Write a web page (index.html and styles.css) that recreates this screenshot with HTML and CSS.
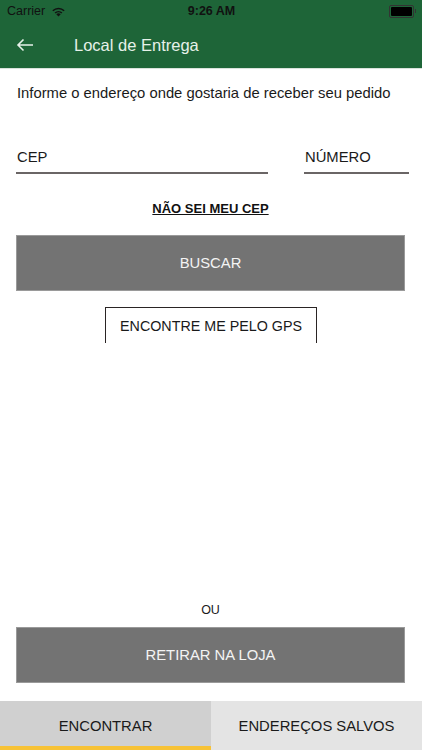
FILE: index.html
```html
<!DOCTYPE html>
<html lang="pt-BR">
<head>
    <meta charset="UTF-8">
    <meta name="viewport" content="width=device-width, initial-scale=1.0">
    <title>Local de Entrega</title>
    <link rel="stylesheet" href="styles.css">
</head>
<body>
    <div class="topbar">
        <div class="status">
            <div class="status-left">
                <span>Carrier</span>
                <svg class="wifi" width="15" height="11" viewBox="0 0 15 11">
                    <path d="M7.5 10.5 L5.3 8.2 A3.2 3.2 0 0 1 9.7 8.2 Z" fill="#111"/>
                    <path d="M3.6 6.5 A5.6 5.6 0 0 1 11.4 6.5 L10.3 7.6 A4.1 4.1 0 0 0 4.7 7.6 Z" fill="#111"/>
                    <path d="M1.3 4.2 A8.9 8.9 0 0 1 13.7 4.2 L12.6 5.3 A7.4 7.4 0 0 0 2.4 5.3 Z" fill="#111"/>
                </svg>
            </div>
            <div class="status-time">9:26 AM</div>
            <div class="status-right">
                <div class="battery"><div class="battery-fill"></div></div>
                <div class="battery-tip"></div>
            </div>
        </div>
        <div class="navbar">
            <svg class="back" width="18" height="14" viewBox="0 0 18 14">
                <path d="M17 7 H2 M7.5 1.5 L2 7 L7.5 12.5" stroke="#e6f1e9" stroke-width="1.6" fill="none"/>
            </svg>
            <span class="title">Local de Entrega</span>
        </div>
    </div>

    <main class="content">
        <p class="intro">Informe o endereço onde gostaria de receber seu pedido</p>

        <div class="fields">
            <div class="field field-cep">CEP</div>
            <div class="field field-num">NÚMERO</div>
        </div>

        <a class="link" href="#">NÃO SEI MEU CEP</a>

        <button class="btn">BUSCAR</button>

        <div class="gps-wrap">
            <button class="btn-outline">ENCONTRE ME PELO GPS</button>
        </div>

        <div class="spacer"></div>

        <p class="or">OU</p>
        <button class="btn">RETIRAR NA LOJA</button>
    </main>

    <nav class="tabs">
        <div class="tab active">ENCONTRAR</div>
        <div class="tab">ENDEREÇOS SALVOS</div>
    </nav>
</body>
</html>
```

FILE: styles.css
```css
html, body {
    height: 100%;
}

body {
    margin: 0;
    font-family: "Liberation Sans", Arial, sans-serif;
    color: #222;
    background: #fff;
    display: flex;
    flex-direction: column;
}

.topbar {
    background-color: #1e6538;
    height: 68px;
    border-bottom: 1px solid #d9e2dc;
}

.status {
    height: 22px;
    display: flex;
    align-items: center;
    justify-content: space-between;
    padding: 0 6px 0 7px;
    font-size: 12.5px;
    color: #111;
}

.status-left {
    display: flex;
    align-items: center;
    gap: 6px;
    width: 120px;
}

.status-time {
    font-weight: bold;
    font-size: 12.5px;
}

.status-right {
    width: 120px;
    display: flex;
    justify-content: flex-end;
    align-items: center;
}

.battery {
    width: 21px;
    height: 9px;
    border: 1px solid #333;
    border-radius: 2px;
    padding: 1px;
}

.battery-fill {
    width: 100%;
    height: 100%;
    background: #000;
    border-radius: 1px;
}

.battery-tip {
    width: 1.5px;
    height: 4px;
    background: #333;
    margin-left: 1px;
}

.navbar {
    height: 46px;
    display: flex;
    align-items: center;
    padding-left: 16px;
}

.back {
    margin-right: 40px;
}

.title {
    color: #e6f1e9;
    font-size: 16.5px;
}

.content {
    flex: 1;
    display: flex;
    flex-direction: column;
    padding: 0 17px 0 16px;
}

.intro {
    margin: 16px 0 0 1px;
    font-size: 14.8px;
    color: #1a1a1a;
}

.fields {
    display: flex;
    justify-content: space-between;
    margin: 48px -4px 0 0;
}

.field {
    font-size: 14.8px;
    color: #1a1a1a;
    padding: 0 0 7px 1px;
    border-bottom: 2px solid #6a6565;
}

.field-cep {
    width: 251px;
}

.field-num {
    width: 104px;
}

.link {
    align-self: center;
    margin-top: 27px;
    font-size: 13px;
    font-weight: bold;
    color: #111;
    text-decoration: underline;
}

.btn {
    margin-top: 19px;
    height: 56px;
    width: 100%;
    background-color: #737373;
    color: #f4f4f4;
    border: 1px solid #9a9a9a;
    font-family: inherit;
    font-size: 14.8px;
}

.gps-wrap {
    display: flex;
    justify-content: center;
    margin-top: 16px;
}

.btn-outline {
    width: 212px;
    height: 36px;
    margin-left: 1px;
    background: #fff;
    border: 1px solid #2a2424;
    border-bottom: none;
    font-family: inherit;
    font-size: 14.3px;
    color: #1a1a1a;
    padding-top: 2px;
}

.spacer {
    flex: 1;
}

.or {
    margin: 0;
    text-align: center;
    font-size: 12.5px;
    color: #1a1a1a;
}

.or + .btn {
    margin-top: 10px;
    margin-bottom: 18px;
}

.tabs {
    display: flex;
    height: 49px;
}

.tab {
    flex: 1;
    display: flex;
    align-items: center;
    justify-content: center;
    background-color: #e4e4e4;
    font-size: 14.8px;
    color: #1a1a1a;
}

.tab.active {
    background-color: #d0d0d0;
    box-shadow: inset 0 -4px 0 #f7c236;
}
```
